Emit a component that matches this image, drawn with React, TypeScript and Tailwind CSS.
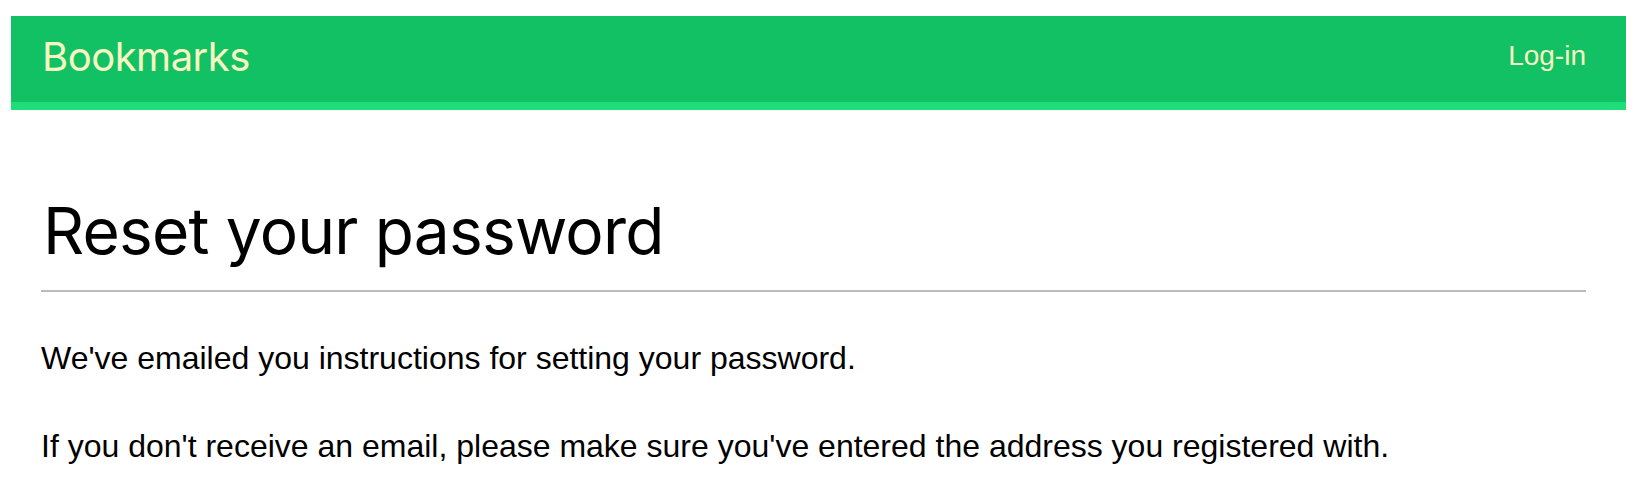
export default function App() {
  return (
    <div className="min-h-[498px] bg-white pt-[16px]">
      {/* Top bar */}
      <header className="ml-[11px] mr-[14px] h-[94px] bg-[#12c163] border-b-[8px] border-[#1fdd78] flex justify-between items-start pl-[31px] pr-[40px]">
        <a className="pt-[17px] text-[40px] leading-[48px] text-[#f7f6c2] font-['Inter',sans-serif] tracking-[-0.5px]">
          Bookmarks
        </a>
        <a className="pt-[24px] text-[28px] leading-[32px] text-[#f7f6c2] font-['Liberation_Sans',Arial,sans-serif]">
          Log-in
        </a>
      </header>

      {/* Content */}
      <main className="pl-[41px] pr-[54px]">
        <h1 className="mt-[83px] pb-[21px] border-b-2 border-[#bbbbbb] text-[64px] leading-[76px] text-black font-['Inter',sans-serif] tracking-[-0.8px] pl-[2px]">
          Reset your password
        </h1>
        <p className="mt-[46px] text-[32px] leading-[40px] text-black font-['Liberation_Sans',Arial,sans-serif]">
          We've emailed you instructions for setting your password.
        </p>
        <p className="mt-[48px] text-[32px] leading-[40px] text-black font-['Liberation_Sans',Arial,sans-serif]">
          If you don't receive an email, please make sure you've entered the address you registered with.
        </p>
      </main>
    </div>
  );
}
